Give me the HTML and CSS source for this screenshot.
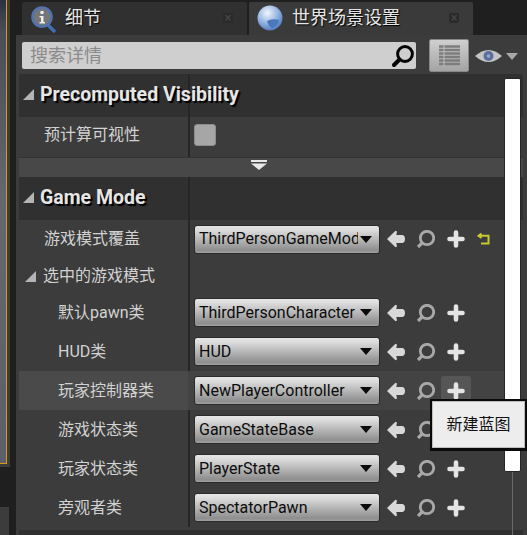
FILE: index.html
```html
<!DOCTYPE html>
<html lang="zh-CN">
<head>
  <meta charset="UTF-8">
  <meta name="viewport" content="width=device-width, initial-scale=1.0">
  <title>世界场景设置</title>
  <link rel="stylesheet" href="styles.css">
</head>
<body>
  <svg class="sprites" width="0" height="0">
    <symbol id="ico-back" viewBox="0 0 18 18">
      <path d="M0 9 L8.5 0.8 L10 1.5 L9.3 5 L15.5 5 Q18 5.5 18 9 Q18 12.5 15.5 13 L9.3 13 L10 16.5 L8.5 17.2 Z" fill="#d8d8d8"/>
    </symbol>
    <symbol id="ico-find" viewBox="0 0 18 18">
      <circle cx="10" cy="8" r="6.7" fill="none" stroke="#a8a8a8" stroke-width="2.8"/>
      <path d="M5.5 12.5 L1 17" stroke="#a8a8a8" stroke-width="3.2"/>
    </symbol>
    <symbol id="ico-plus" viewBox="0 0 18 18">
      <path d="M9 2.5 V15.5 M2.5 9 H15.5" stroke="#e4e4e4" stroke-width="4.6" stroke-linecap="round"/>
    </symbol>
  </svg>

  <div class="app">
    <aside class="side">
      <div class="viewport"><div class="view-fill"></div></div>
      <div class="side-gap"></div>
      <div class="side-box"></div>
    </aside>

    <main class="panel">
      <div class="tabs">
        <div class="tab tab-first">
          <svg class="tab-ico" width="26" height="28" viewBox="0 0 26 28">
            <path d="M16 19 L24 27" stroke="#3f6fb5" stroke-width="3.4"/>
            <circle cx="11" cy="12" r="9.5" fill="#777" stroke="#5473ad" stroke-width="2.6"/>
            <circle cx="11" cy="7.5" r="1.8" fill="#eee"/>
            <path d="M8.5 11 H12.5 V17 H14 V18.5 H8.5 V17 H10 V12.5 H8.5 Z" fill="#eee"/>
          </svg>
          <span class="tab-label">细节</span>
          <span class="tab-close">×</span>
        </div>
        <div class="tab tab-second">
          <svg class="tab-ico" width="26" height="28" viewBox="0 0 26 28">
            <defs>
              <radialGradient id="globe" cx="0.4" cy="0.3" r="0.8">
                <stop offset="0" stop-color="#f2f6fc"/>
                <stop offset="0.55" stop-color="#8fb0e0"/>
                <stop offset="1" stop-color="#3e68b0"/>
              </radialGradient>
            </defs>
            <circle cx="13" cy="14" r="12.5" fill="url(#globe)"/>
            <path d="M10 17 Q15 14 22 16 Q21 22 15 24 Q11 22 10 17 Z" fill="#4b77bd"/>
          </svg>
          <span class="tab-label">世界场景设置</span>
          <span class="tab-close">×</span>
        </div>
      </div>

      <div class="toolbar">
        <div class="search">
          <span class="search-text">搜索详情</span>
          <svg width="24" height="24" viewBox="0 0 24 24">
            <circle cx="14" cy="10" r="7.4" fill="none" stroke="#050505" stroke-width="3"/>
            <path d="M8.5 15.5 L3 21" stroke="#050505" stroke-width="4" stroke-linecap="round"/>
          </svg>
        </div>
        <button class="grid-btn">
          <svg width="21" height="22" viewBox="0 0 21 22">
            <path d="M0 1.5 H21 M0 5 H21 M0 8.5 H21 M0 12 H21 M0 15.5 H21 M0 19 H21" stroke="#7d7d7d" stroke-width="2.4"/>
            <path d="M5 0 V21" stroke="#c0c0c0" stroke-width="1"/>
          </svg>
        </button>
        <svg class="eye" width="27" height="16" viewBox="0 0 27 16">
          <path d="M0 8 Q13.5 -4 27 8 Q13.5 20 0 8 Z" fill="#c4c4c4"/>
          <circle cx="13.5" cy="8" r="5" fill="#5a6f9e"/>
          <circle cx="13.5" cy="8" r="1.8" fill="#9aa8c6"/>
        </svg>
        <span class="eye-arrow"></span>
      </div>

      <div class="details">
        <section class="cat-head">
          <span class="twist"></span>
          <span class="cat-title">Precomputed Visibility</span>
        </section>
        <div class="row row-first">
          <div class="name">预计算可视性</div>
          <div class="value"><span class="check"></span></div>
        </div>
        <div class="expand"><span class="expand-arrow"></span></div>

        <section class="cat-head">
          <span class="twist"></span>
          <span class="cat-title">Game Mode</span>
        </section>
        <div class="row row-override">
          <div class="name">游戏模式覆盖</div>
          <div class="value">
            <div class="combo"><span class="combo-text">ThirdPersonGameMode</span><span class="combo-arrow"></span></div>
            <svg class="act act-back"><use href="#ico-back"/></svg>
            <svg class="act act-find"><use href="#ico-find"/></svg>
            <svg class="act act-plus"><use href="#ico-plus"/></svg>
            <svg class="revert" width="13" height="12" viewBox="0 0 13 12">
              <path d="M4.5 0.5 L1.5 2.8 L4.5 5 M2 2.8 H11.5 V10.5 H4" fill="none" stroke="#c8c832" stroke-width="2"/>
            </svg>
          </div>
        </div>
        <div class="row row-group">
          <div class="name"><span class="twist twist-small"></span>选中的游戏模式</div>
          <div class="value"></div>
        </div>
        <div class="row row-child">
          <div class="name">默认pawn类</div>
          <div class="value">
            <div class="combo"><span class="combo-text">ThirdPersonCharacter</span><span class="combo-arrow"></span></div>
            <svg class="act act-back"><use href="#ico-back"/></svg>
            <svg class="act act-find"><use href="#ico-find"/></svg>
            <svg class="act act-plus"><use href="#ico-plus"/></svg>
          </div>
        </div>
        <div class="row row-child">
          <div class="name">HUD类</div>
          <div class="value">
            <div class="combo"><span class="combo-text">HUD</span><span class="combo-arrow"></span></div>
            <svg class="act act-back"><use href="#ico-back"/></svg>
            <svg class="act act-find"><use href="#ico-find"/></svg>
            <svg class="act act-plus"><use href="#ico-plus"/></svg>
          </div>
        </div>
        <div class="row row-child row-hover">
          <div class="name">玩家控制器类</div>
          <div class="value">
            <div class="combo"><span class="combo-text">NewPlayerController</span><span class="combo-arrow"></span></div>
            <svg class="act act-back"><use href="#ico-back"/></svg>
            <svg class="act act-find"><use href="#ico-find"/></svg>
            <span class="plus-hot"><svg class="act act-plus"><use href="#ico-plus"/></svg></span>
          </div>
        </div>
        <div class="row row-child">
          <div class="name">游戏状态类</div>
          <div class="value">
            <div class="combo"><span class="combo-text">GameStateBase</span><span class="combo-arrow"></span></div>
            <svg class="act act-back"><use href="#ico-back"/></svg>
            <svg class="act act-find"><use href="#ico-find"/></svg>
            <svg class="act act-plus"><use href="#ico-plus"/></svg>
          </div>
        </div>
        <div class="row row-child">
          <div class="name">玩家状态类</div>
          <div class="value">
            <div class="combo"><span class="combo-text">PlayerState</span><span class="combo-arrow"></span></div>
            <svg class="act act-back"><use href="#ico-back"/></svg>
            <svg class="act act-find"><use href="#ico-find"/></svg>
            <svg class="act act-plus"><use href="#ico-plus"/></svg>
          </div>
        </div>
        <div class="row row-child">
          <div class="name">旁观者类</div>
          <div class="value">
            <div class="combo"><span class="combo-text">SpectatorPawn</span><span class="combo-arrow"></span></div>
            <svg class="act act-back"><use href="#ico-back"/></svg>
            <svg class="act act-find"><use href="#ico-find"/></svg>
            <svg class="act act-plus"><use href="#ico-plus"/></svg>
          </div>
        </div>
        <div class="next-head"></div>
      </div>

      <div class="scroll-line"></div>
      <div class="scroll-thumb"></div>
      <div class="tooltip">新建蓝图</div>
    </main>
  </div>
</body>
</html>
```

FILE: styles.css
```css
* {
  box-sizing: border-box;
}
html, body {
  margin: 0;
  height: 100%;
  overflow: hidden;
}
body {
  background-color: #1f1f1f;
  font-family: Roboto, "Noto Sans CJK SC", sans-serif;
  color: #d2d2d2;
}
.sprites {
  position: absolute;
}
.app {
  display: flex;
  height: 535px;
}

/* left edge of the viewport behind the panel */
.side {
  width: 16px;
  flex: none;
  display: flex;
  flex-direction: column;
}
.viewport {
  height: 467px;
  width: 10px;
  background-color: #3c3c3c;
}
.view-fill {
  width: 7px;
  height: 464px;
  background: linear-gradient(#2c3140, #4a4d57 30px, #63676f 200px, #5b5f69);
  border-right: 1px solid #e09a10;
  border-bottom: 1px solid #e09a10;
}
.side-gap {
  height: 40px;
}
.side-box {
  flex: 1;
  width: 9px;
  background-color: #3c3c3c;
}

.panel {
  position: relative;
  flex: 1;
  display: flex;
  flex-direction: column;
  min-width: 0;
  background-color: #3c3c3c;
}

/* tabs */
.tabs {
  height: 35px;
  padding-top: 2px;
  padding-left: 6px;
  display: flex;
  gap: 2px;
  background-color: #1f1f1f;
}
.tab {
  width: 225px;
  display: flex;
  align-items: center;
  background-color: #3a3a3a;
  border-radius: 2px 2px 0 0;
  position: relative;
}
.tab-first {
  background-color: #303030;
}
.tab-ico {
  position: absolute;
  left: 9px;
  top: 3px;
}
.tab-second .tab-ico {
  left: 8px;
  top: 2px;
}
.tab-label {
  margin-left: 43px;
  padding-bottom: 2px;
  font-size: 18px;
  line-height: 31px;
  color: #e6e6e6;
  text-shadow: 1px 1px 1px #000;
}
.tab-close {
  position: absolute;
  right: 14px;
  top: 11px;
  width: 10px;
  height: 10px;
  border-radius: 2px;
  background-color: #2a2a2a;
  color: #444;
  font: bold 12px/10px "Liberation Sans", sans-serif;
  text-align: center;
}
.tab-second {
  width: 224px;
}

/* search row */
.toolbar {
  height: 39px;
  background-color: #3c3c3c;
  padding: 4px 0 0 6px;
  display: flex;
  align-items: flex-start;
}
.search {
  width: 394px;
  height: 27px;
  margin-top: 3px;
  padding: 0 1px 0 8px;
  background-color: #cfcfcf;
  border-radius: 2px;
  display: flex;
  align-items: center;
  justify-content: space-between;
}
.search-text {
  font-size: 18px;
  line-height: 27px;
  color: #8b8b8b;
}
.grid-btn {
  width: 40px;
  height: 33px;
  margin-left: 13px;
  padding: 0;
  display: flex;
  align-items: center;
  justify-content: center;
  border: 1px solid #888;
  border-radius: 2px;
  background: linear-gradient(#cfcfcf, #a4a4a4);
}
.eye {
  margin: 9px 0 0 6px;
}
.eye-arrow {
  margin: 14px 0 0 4px;
  border-left: 6px solid transparent;
  border-right: 6px solid transparent;
  border-top: 7px solid #a8a8a8;
}

/* details list */
.details {
  flex: 1;
  margin-left: 3px;
  margin-right: 4px;
  background-color: #3c3c3c;
  background-image: linear-gradient(#262626, #262626);
  background-size: 2px 453px;
  background-position: 169px 0;
  background-repeat: no-repeat;
  min-height: 0;
}
.cat-head {
  height: 43px;
  display: flex;
  align-items: center;
  padding: 0 0 3px 4px;
  background-color: #303030;
  background-image: linear-gradient(#262626, #262626);
  background-size: 2px 100%;
  background-position: 169px 0;
  background-repeat: no-repeat;
  border-radius: 2px 2px 0 0;
}
.twist {
  width: 0;
  height: 0;
  border-left: 11px solid transparent;
  border-bottom: 11px solid #b4b4b4;
  margin-top: 1px;
}
.twist-small {
  display: inline-block;
  margin: 0 7px 0 0;
  vertical-align: -1px;
}
.cat-title {
  margin-left: 6px;
  font-family: Roboto, sans-serif;
  font-weight: 700;
  font-size: 19.5px;
  color: #e6e6e6;
  text-shadow: 2px 2px 1px #000;
}
.row {
  height: 39px;
  display: flex;
  align-items: center;
  font-size: 16px;
  line-height: 22px;
  margin-right: 19px;
}
.row-first {
  height: 40px;
  padding-bottom: 4px;
}
.row-override {
  height: 38px;
}
.row-group {
  height: 35px;
}
.name {
  width: 169px;
  padding-left: 25px;
  flex: none;
  white-space: nowrap;
}
.row-first .name {
  padding-bottom: 1px;
}
.row-group .name {
  padding-left: 6px;
}
.row-child .name {
  padding-left: 39px;
}
.value {
  flex: 1;
  padding-left: 6px;
  display: flex;
  align-items: center;
  min-width: 0;
}
.row-hover {
  background-color: #434343;
}
.row-hover .name {
  background-color: #4a4a4a;
  height: 39px;
  line-height: 39px;
}
.check {
  width: 22px;
  height: 22px;
  border-radius: 3px;
  background-color: #a6a6a6;
  border: 1px solid #8c8c8c;
}
.expand {
  height: 20px;
  background-color: #484848;
  display: flex;
  justify-content: center;
  border-top: 1px solid #333;
}
.expand-arrow {
  width: 16px;
  height: 10px;
  margin: 2px 0 0 -24px;
  background-color: #e8e8e8;
  clip-path: polygon(0 0, 100% 0, 100% 20%, 0 20%, 0 35%, 100% 35%, 50% 100%, 0 35%);
}
.combo {
  width: 186px;
  height: 29px;
  flex: none;
  padding: 0 7px 0 4px;
  display: flex;
  align-items: center;
  justify-content: space-between;
  background: linear-gradient(#e6e6e6, #dcdcdc 15%, #8e8e8e 90%, #a0a0a0);
  border: 1px solid #2a2a2a;
  border-radius: 3px;
}
.combo-text {
  font-family: Roboto, sans-serif;
  font-size: 16px;
  color: #0c0c0c;
  width: 159px;
  overflow: hidden;
  white-space: nowrap;
}
.combo-arrow {
  flex: none;
  border-left: 6px solid transparent;
  border-right: 6px solid transparent;
  border-top: 7px solid #0a0a0a;
}
.act {
  width: 18px;
  height: 18px;
  flex: none;
}
.act-back {
  margin-left: 7px;
}
.act-find {
  margin-left: 12px;
}
.act-plus {
  margin-left: 12px;
}
.plus-hot {
  margin-left: 6px;
  width: 30px;
  height: 30px;
  background-color: #565656;
  border-radius: 3px;
  display: flex;
  align-items: center;
  justify-content: center;
}
.plus-hot .act-plus {
  margin: 0;
}
.revert {
  margin-left: 12px;
  margin-bottom: 1px;
}
.next-head {
  height: 8px;
  margin-top: 3px;
  background-color: #303030;
}

/* overlays */
.scroll-thumb {
  position: absolute;
  left: 488px;
  top: 78px;
  width: 17px;
  height: 394px;
  background-color: #fff;
  border: 1px solid #262626;
  border-radius: 2px;
}
.scroll-line {
  position: absolute;
  left: 496px;
  top: 472px;
  bottom: 0;
  width: 1px;
  background-color: #6a6a6a;
}
.tooltip {
  position: absolute;
  left: 414px;
  top: 399px;
  width: 97px;
  height: 52px;
  border: 2px solid #0a0a0a;
  border-bottom-width: 3px;
  box-shadow: inset 0 0 0 1px #bdbdbd;
  background-color: #ededed;
  color: #111;
  font-size: 16px;
  line-height: 47px;
  text-align: center;
}
```
